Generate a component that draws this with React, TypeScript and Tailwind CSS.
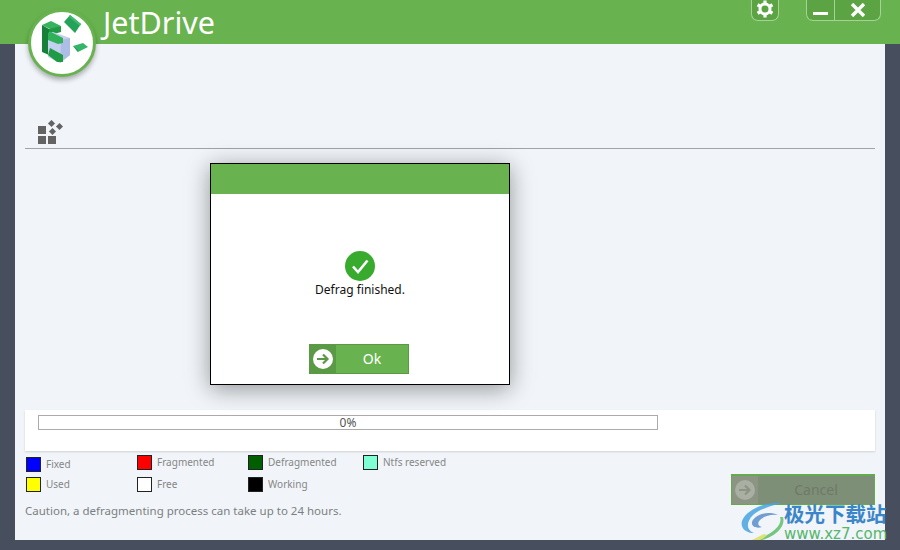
const legendRows = [
  [
    { label: "Fixed", color: "bg-[#0000ff]", drop: "mt-[2px]" },
    { label: "Fragmented", color: "bg-[#ff0000]", drop: "" },
    { label: "Defragmented", color: "bg-[#005f00]", drop: "" },
    { label: "Ntfs reserved", color: "bg-[#7fffd4]", drop: "" },
  ],
  [
    { label: "Used", color: "bg-[#ffff00]", drop: "" },
    { label: "Free", color: "bg-white", drop: "" },
    { label: "Working", color: "bg-black", drop: "" },
  ],
];

function ArrowBadge({ color }: { color: string }) {
  return (
    <svg width="20" height="20" viewBox="0 0 20 20">
      <circle cx="10" cy="10" r="10" fill="#fff" fillOpacity={color === "#8c9484" ? 0.25 : 1} />
      <path d="M4 10h10M10 5.5l4.5 4.5-4.5 4.5" fill="none" stroke={color} strokeWidth="2.2" />
    </svg>
  );
}

function GearIcon() {
  return (
    <svg width="18" height="18" viewBox="0 0 18 18">
      <circle cx="9" cy="9" r="5" fill="none" stroke="#fff" strokeWidth="3" />
      <g stroke="#fff" strokeWidth="3.2">
        <path d="M9 0.5v3.5M9 14v3.5" />
        <path d="M1.6 4.75l3 1.75M13.4 11.5l3 1.75" />
        <path d="M1.6 13.25l3-1.75M13.4 6.5l3-1.75" />
      </g>
    </svg>
  );
}

function Logo() {
  return (
    <div className="absolute left-[28px] top-[9px] w-[68px] h-[68px] rounded-full bg-white border-[3px] border-[#68b34f] shadow-[0_3px_5px_rgba(0,0,0,0.3)]">
      <svg width="62" height="62" viewBox="0 0 62 62">
        <path d="M33 10l6-7 11 9-6 9z" fill="#25a259" />
        <path d="M39 3l11 9-1 2-11-9z" fill="#3dbb6e" />
        <path d="M42 34l10-3 5 4-10 5z" fill="#35b56a" />
        <path d="M42 34l5 6v-2z" fill="#1f9a4e" />
        <path d="M11 13l9-4 10 5-9 4z" fill="#36b35c" />
        <path d="M11 13l7 4v26l-7-3z" fill="#167f3a" />
        <path d="M18 17l12-3v6l-7 2v25l-5-4z" fill="#1f9a45" />
        <path d="M17 21l5-1 17 6v17l-10 8-12-6z" fill="#c3d0ef" />
        <path d="M30 28l9-2v17l-10 8z" fill="#adbde6" />
        <path d="M17 21l3-1 12 6v5l-5 1-10-4z" fill="#2fb15a" />
        <path d="M19 36l13 7v7h-6l-9-7z" fill="#1f9a45" />
      </svg>
    </div>
  );
}

function SectionIcon() {
  return (
    <svg width="28" height="26" viewBox="0 0 28 26" fill="#636363">
      <rect x="1" y="6" width="8" height="8" />
      <rect x="1" y="16" width="8" height="8" />
      <rect x="11" y="16" width="8" height="8" />
      <rect x="12" y="1" width="5" height="5" transform="rotate(45 14.5 3.5)" />
      <rect x="20" y="4" width="5" height="5" transform="rotate(45 22.5 6.5)" />
      <rect x="13" y="9" width="5" height="5" transform="rotate(45 15.5 11.5)" />
    </svg>
  );
}

export default function App() {
  return (
    <div
      className="relative w-[900px] h-[550px] overflow-hidden bg-[#474e5d] flex flex-col"
      style={{ fontFamily: '"Noto Sans", "Open Sans", sans-serif' }}
    >
      <header className="h-[44px] shrink-0 bg-[#68b34f] flex items-start">
        <h1 className="ml-[103px] text-[30.5px] leading-[44px] text-white">JetDrive</h1>
        <div className="ml-auto mr-[19px] flex items-start">
          <button className="w-[28px] h-[21px] rounded-b-[7px] border border-t-0 border-[#a5d295] bg-[#5ca344] flex items-start justify-center">
            <GearIcon />
          </button>
          <div className="ml-[27px] w-[75px] h-[21px] rounded-b-[7px] border border-t-0 border-[#a5d295] bg-[#5ca344] flex">
            <button className="w-[28px] flex items-end justify-center pb-[5px] border-r border-[#a5d295]">
              <span className="block w-[15px] h-[3px] bg-white" />
            </button>
            <button className="flex-1 flex items-center justify-center text-white">
              <svg width="16" height="14" viewBox="0 0 16 14">
                <path d="M2 1l12 12M14 1L2 13" stroke="#fff" strokeWidth="3.4" fill="none" />
              </svg>
            </button>
          </div>
        </div>
      </header>

      <main className="mx-[15px] h-[496px] shrink-0 bg-[#f1f5f9] px-[10px] flex flex-col">
        <div className="mt-[75px] h-[30px] border-b border-[#a3a3a3] pl-[12px] flex items-end pb-[2px]">
          <SectionIcon />
        </div>

        <div className="mt-[261px] h-[41px] bg-white shadow-[0_1px_2px_rgba(0,0,0,0.15)] pl-[13px] pt-[5px]">
          <div className="w-[620px] h-[15px] border border-[#ababab] bg-white text-center text-[12px] leading-[14px] text-[#555]">
            0%
          </div>
        </div>

        <div className="flex">
          <div className="flex-1 pt-[4px]">
            {legendRows.map((row, i) => (
              <div key={i} className={`flex items-start pl-[1px] ${i === 0 ? "h-[22px]" : "h-[20px]"}`}>
                {row.map((item) => (
                  <div
                    key={item.label}
                    className={`flex items-center ${item.drop} ${item.label === "Defragmented" ? "w-[115px]" : "w-[111px]"}`}
                  >
                    <span className={`w-[15px] h-[15px] border border-[#222] ${item.color}`} />
                    <span className="ml-[5px] text-[10px] text-[#868686]">{item.label}</span>
                  </div>
                ))}
              </div>
            ))}
            <p className="mt-[7px] text-[11.5px] leading-[14px] text-[#7b7f82]">
              Caution, a defragmenting process can take up to 24 hours.
            </p>
          </div>
          <button className="mt-[23px] w-[144px] h-[31px] bg-[#7e8f77] border border-[#65ab4e] border-t-2 flex">
            <span className="w-[26px] h-full bg-[#8c9484] flex items-center justify-center">
              <ArrowBadge color="#8c9484" />
            </span>
            <span className="flex-1 text-center text-[14px] leading-[28px] text-[#6d7a68]">Cancel</span>
          </button>
        </div>
      </main>

      <Logo />

      <div className="absolute left-[210px] top-[163px] w-[300px] h-[222px] bg-white border border-black shadow-[0_4px_22px_rgba(0,0,0,0.4)] flex flex-col items-center">
        <div className="self-stretch h-[30px] bg-[#68b34f]" />
        <svg className="mt-[57px]" width="30" height="30" viewBox="0 0 30 30">
          <circle cx="15" cy="15" r="15" fill="#38ab2f" />
          <path d="M8 15.5l5 5.5 9.5-11.5" fill="none" stroke="#fff" strokeWidth="2.6" />
        </svg>
        <p className="text-[12px] leading-[16px] text-[#111] mt-[1px]">Defrag finished.</p>
        <button className="mt-[46px] self-start ml-[98px] w-[100px] h-[30px] bg-[#68b34f] border border-[#5a9a45] flex">
          <span className="w-[26px] h-full bg-[#5a9a45] flex items-center justify-center">
            <ArrowBadge color="#5a9a45" />
          </span>
          <span className="flex-1 text-center text-[14px] leading-[28px] text-white">Ok</span>
        </button>
      </div>

      <div className="absolute left-[740px] top-[500px] w-[160px] flex">
        <svg width="45" height="40" viewBox="0 0 45 40" className="shrink-0 opacity-85">
          <path d="M42 3C26 1 6 10 2 21c-2 7 4 12 12 12C6 30 6 22 13 15 21 8 32 6 42 3z" fill="#4aa3e0" />
          <path d="M38 15C28 10 14 15 12 22c-1 5 5 7 10 5-4-1-5-4-2-7 4-4 11-6 18-5z" fill="#5b8fc9" />
          <path d="M40 17c3 8-8 18-26 23h8c12-3 24-13 21-23z" fill="#5fbf6a" />
          <path d="M24 34c-4 2-8 4-12 6h8c3-1 5-3 7-5z" fill="#d8e05a" />
        </svg>
        <div className="flex flex-col -ml-[1px]">
          <span
            className="text-[20.5px] leading-[26px] font-bold text-[#3b86c8] whitespace-nowrap"
            style={{ fontFamily: '"Noto Sans CJK SC", sans-serif' }}
          >
            极光下载站
          </span>
          <span
            className="text-[15px] leading-[16px] text-[#56b56d] whitespace-nowrap"
            style={{ fontFamily: '"DejaVu Sans", sans-serif' }}
          >
            www.xz7.com
          </span>
        </div>
      </div>
    </div>
  );
}
